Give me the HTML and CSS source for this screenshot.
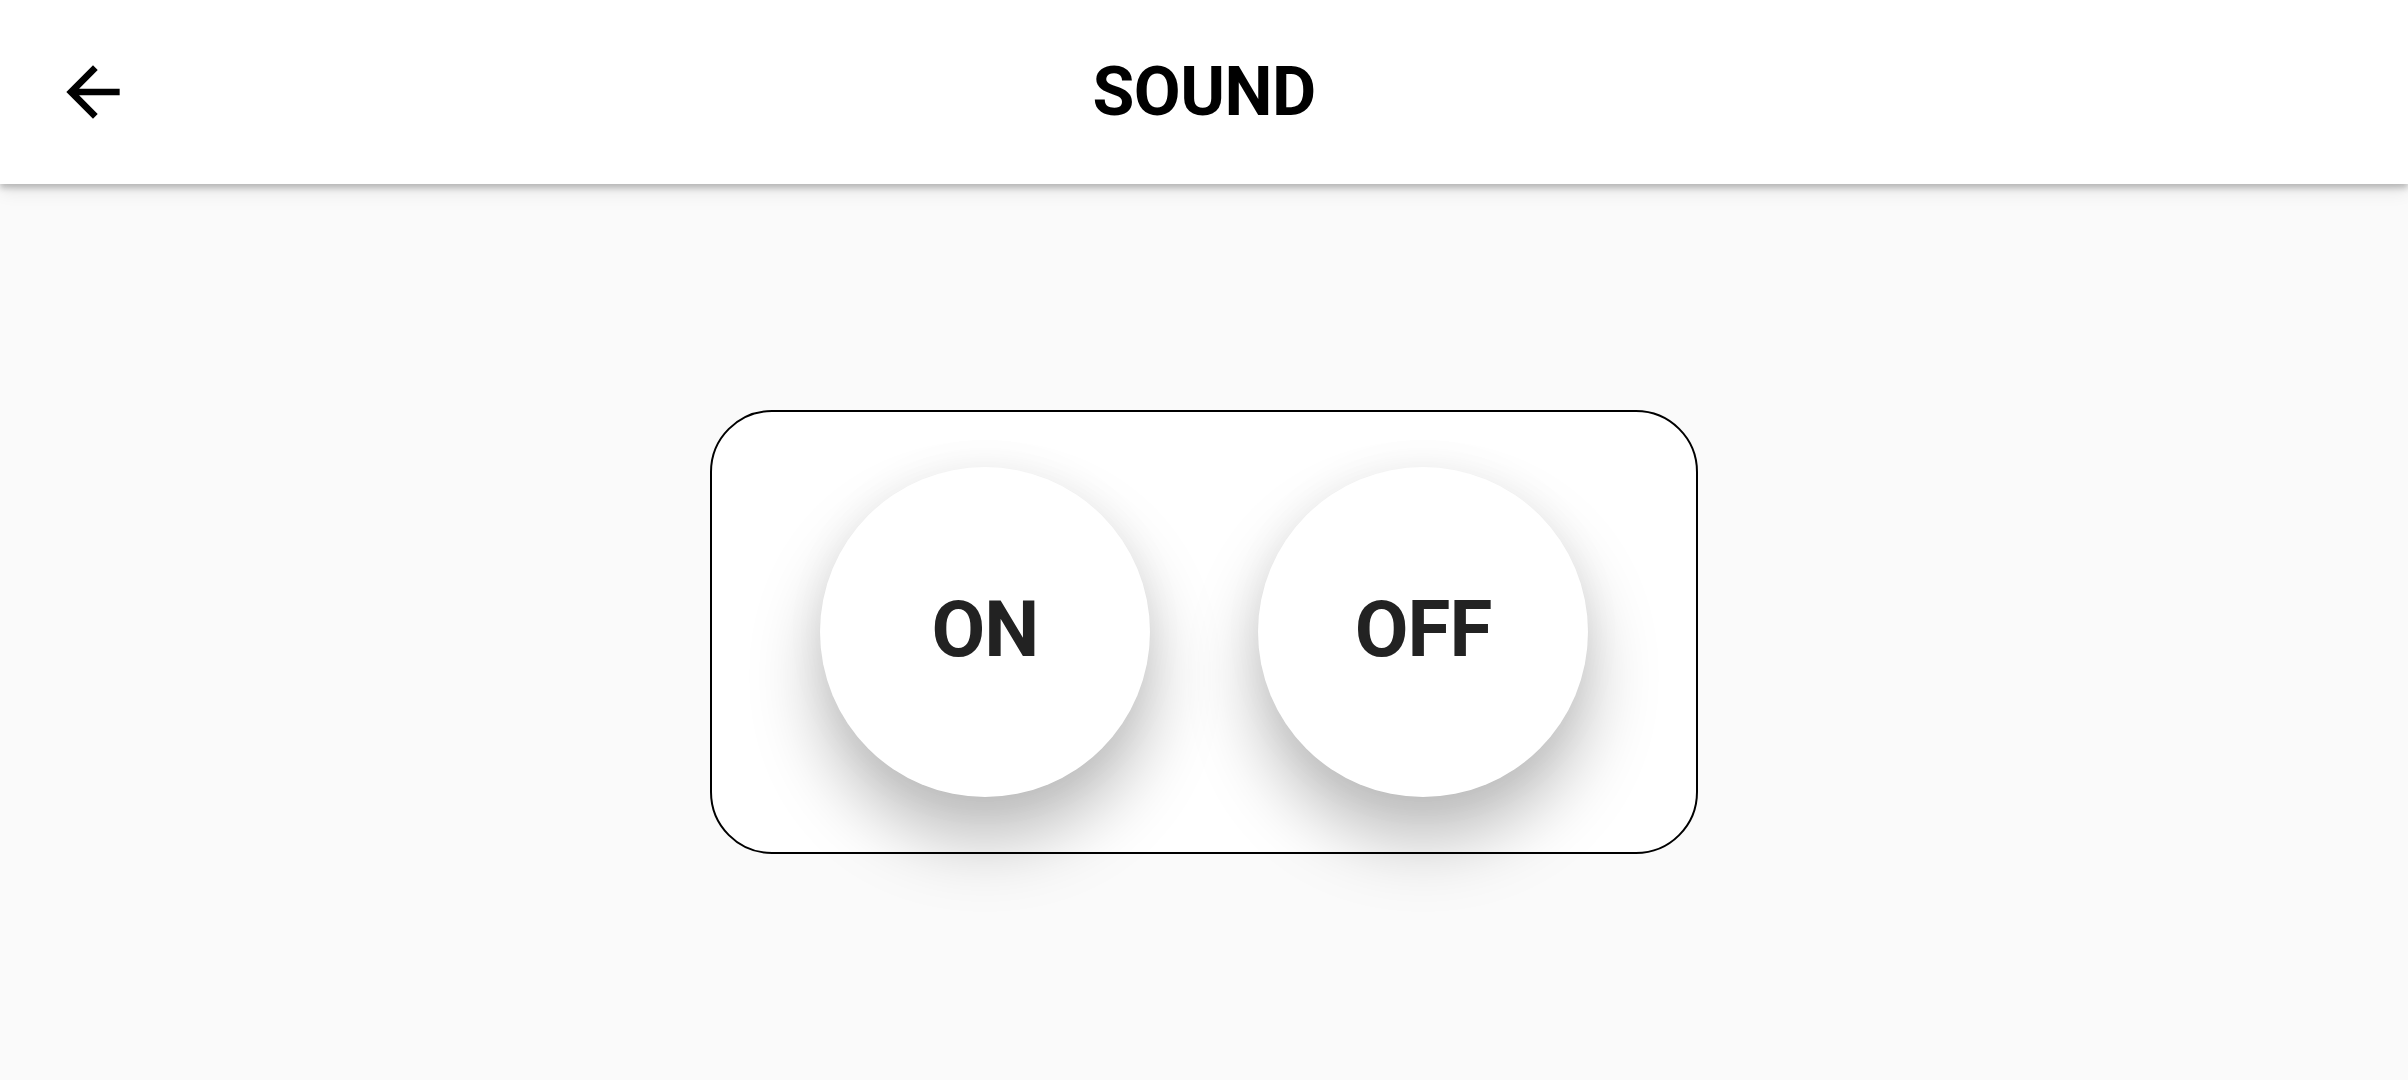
FILE: index.html
```html
<!DOCTYPE html>
<html>
<head>
<meta charset="utf-8">
<link rel="stylesheet" href="styles.css">
</head>
<body>
<div class="app">
  <header class="topbar">
    <div class="nav-left">
      <button class="back" aria-label="Back">
        <svg viewBox="0 0 24 24" width="80" height="80"><path d="M20 11H7.83l5.59-5.59L12 4l-8 8 8 8 1.41-1.41L7.83 13H20v-2z" fill="#000"/></svg>
      </button>
    </div>
    <h1 class="title">SOUND</h1>
    <div class="nav-right"></div>
  </header>
  <main class="content">
    <div class="card">
      <button class="round">ON</button>
      <button class="round">OFF</button>
    </div>
  </main>
</div>
</body>
</html>
```

FILE: styles.css
```css
html, body {
  margin: 0;
  padding: 0;
  height: 100%;
}
body {
  background: #fafafa;
  font-family: Roboto, "Noto Sans", sans-serif;
  overflow: hidden;
}
.app {
  display: flex;
  flex-direction: column;
  height: 1080px;
}
.topbar {
  position: relative;
  z-index: 2;
  height: 184px;
  flex: 0 0 184px;
  background: #ffffff;
  box-shadow: 0 4px 6px rgba(0,0,0,0.22), 0 8px 16px rgba(0,0,0,0.08);
  display: grid;
  grid-template-columns: 1fr auto 1fr;
  align-items: center;
}
.nav-left {
  display: flex;
  align-items: center;
  padding-left: 53px;
}
.back {
  border: 0;
  background: transparent;
  padding: 0;
  width: 80px;
  height: 80px;
  display: flex;
}
.title {
  margin: 0;
  font-size: 68px;
  font-weight: 700;
  color: #000;
  letter-spacing: -0.5px;
  line-height: 1;
}
.content {
  flex: 1;
  display: flex;
  align-items: center;
  justify-content: center;
}
.card {
  box-sizing: border-box;
  width: 988px;
  height: 444px;
  background: #ffffff;
  border: 2px solid #000;
  border-radius: 62px;
  display: flex;
  align-items: center;
  justify-content: center;
  gap: 108px;
}
.round {
  width: 330px;
  height: 330px;
  border-radius: 50%;
  border: 0;
  background: #ffffff;
  font-family: Roboto, "Noto Sans", sans-serif;
  font-size: 78px;
  font-weight: 700;
  color: #222222;
  letter-spacing: -1px;
  padding: 0 0 6px 0;
  box-shadow: 0 44px 70px rgba(0,0,0,0.26), 0 0 40px rgba(0,0,0,0.05);
}
```
